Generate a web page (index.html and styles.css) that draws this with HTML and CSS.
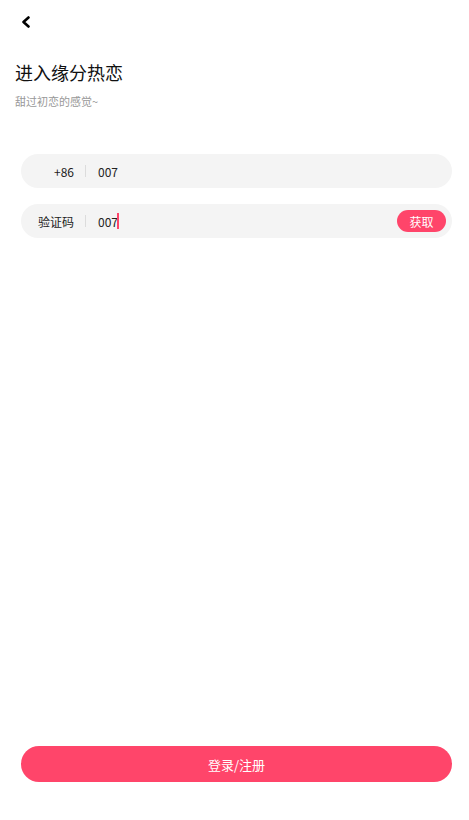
FILE: index.html
```html
<!DOCTYPE html>
<html lang="zh-CN">
<head>
  <meta charset="UTF-8" />
  <title>登录</title>
  <meta name="viewport" content="width=device-width, initial-scale=1" />
  <link rel="stylesheet" href="styles.css">
</head>
<body>

  <div class="page">
    <header class="top-bar">
      <button class="back-btn" aria-label="返回">
        <svg width="10" height="12" viewBox="0 0 10 12">
          <polyline points="7.5,1.5 2.5,6 7.5,10.5" fill="none" stroke="#000" stroke-width="2.6" stroke-linecap="round" stroke-linejoin="round" />
        </svg>
      </button>
    </header>

    <section class="intro">
      <h1>进入缘分热恋</h1>
      <p>甜过初恋的感觉~</p>
    </section>

    <form class="login-form" onsubmit="event.preventDefault();">
      <div class="field">
        <span class="field-label">+86</span>
        <span class="field-sep"></span>
        <span class="field-value">007</span>
      </div>

      <div class="field">
        <span class="field-label">验证码</span>
        <span class="field-sep"></span>
        <span class="field-value">007<span class="caret"></span></span>
        <button type="button" class="code-btn">获取</button>
      </div>

      <div class="spacer"></div>

      <button type="submit" class="submit-btn">登录/注册</button>
    </form>
  </div>

</body>
</html>
```

FILE: styles.css
```css
:root {
  --accent: #ff456a;
  --field-bg: #f4f4f4;
  --fg: #111;
  --muted: #999;
}

* {
  box-sizing: border-box;
}

body {
  margin: 0;
  background: #fff;
  color: var(--fg);
  font-family: "Noto Sans CJK SC", "Noto Sans", sans-serif;
}

.page {
  height: 820px;
  display: flex;
  flex-direction: column;
  padding: 0 17px 38px 21px;
}

.top-bar {
  height: 44px;
  display: flex;
  align-items: center;
}

.back-btn {
  background: none;
  border: none;
  padding: 0;
  width: 10px;
  height: 12px;
  display: block;
  cursor: pointer;
}

.back-btn svg {
  display: block;
}

.intro {
  margin-left: -6px;
  margin-top: 15px;
}

.intro h1 {
  margin: 0;
  font-size: 18px;
  font-weight: 400;
  line-height: 26px;
}

.intro p {
  margin: 8px 0 0;
  font-size: 11px;
  line-height: 16px;
  color: var(--muted);
}

.login-form {
  flex: 1;
  display: flex;
  flex-direction: column;
  margin-top: 45px;
}

.field {
  height: 34px;
  border-radius: 17px;
  background: var(--field-bg);
  display: flex;
  align-items: center;
  padding: 0 6px 0 17px;
  margin-bottom: 16px;
  font-size: 12px;
  color: #222;
}

.field-label {
  width: 36px;
  text-align: right;
}

.field-sep {
  width: 1px;
  height: 12px;
  background: #dcdcdc;
  margin: 0 12px 0 11px;
}

.field-value {
  flex: 1;
  display: flex;
  align-items: center;
}

.caret {
  width: 2px;
  height: 16px;
  background: var(--accent);
  margin-left: -1px;
}

.code-btn {
  height: 22px;
  width: 49px;
  border: none;
  border-radius: 11px;
  background: var(--accent);
  color: #fff;
  font-family: inherit;
  font-size: 12px;
  padding: 0;
  cursor: pointer;
}

.spacer {
  flex: 1;
}

.submit-btn {
  height: 36px;
  border: none;
  border-radius: 18px;
  background: var(--accent);
  color: #fff;
  font-family: inherit;
  font-size: 13px;
  cursor: pointer;
}
```
